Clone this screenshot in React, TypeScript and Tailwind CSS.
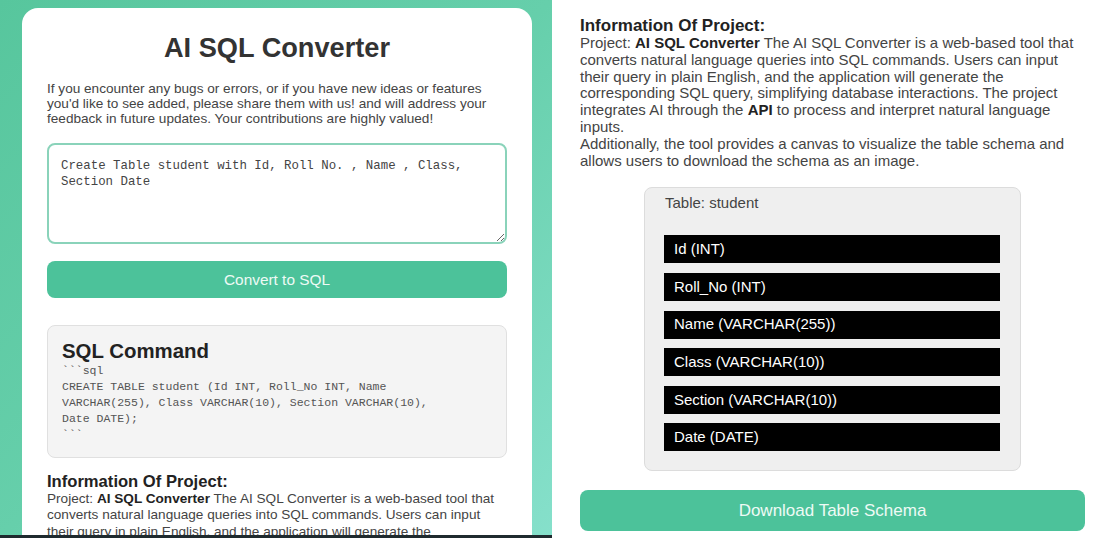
import React from 'react';

const columns = [
    'Id (INT)',
    'Roll_No (INT)',
    'Name (VARCHAR(255))',
    'Class (VARCHAR(10))',
    'Section (VARCHAR(10))',
    'Date (DATE)',
];

const sans = "font-['Liberation_Sans',Arial,sans-serif]";
const mono = "font-['Liberation_Mono','DejaVu_Sans_Mono',monospace]";

function ProjectInfo({ small }: { small?: boolean }) {
    return (
        <div className={small ? 'text-[13.6px] leading-[16.3px] text-[#444]' : 'text-[15px] leading-[16.8px] text-[#444]'}>
            <h3 className={small ? 'text-[16.6px] leading-[18px] font-bold text-[#222]' : 'text-[17px] leading-[18px] font-bold text-[#222]'}>
                Information Of Project:
            </h3>
            <p>
                Project: <b className="text-[#222]">AI SQL Converter</b> The AI SQL Converter is a web-based tool that converts natural
                language queries into SQL commands. Users can input their query in plain English, and the application will generate
                the corresponding SQL query, simplifying database interactions. The project integrates AI through the{' '}
                <b className="text-[#222]">API</b> to process and interpret natural language inputs.
                <br />
                Additionally, the tool provides a canvas to visualize the table schema and allows users to download the schema as an
                image.
            </p>
        </div>
    );
}

export default function App() {
    return (
        <div className={`flex w-[1105px] h-[538px] overflow-hidden bg-white ${sans}`}>
            {/* left: converter page */}
            <div className="w-[552px] h-full flex flex-col bg-gradient-to-br from-[#57c69d] via-[#66cfab] to-[#86e0cb]">
                <div className="flex-1 min-h-0 overflow-hidden pl-[22px] pr-[20px] pt-[8px]">
                    <div className="bg-white rounded-[16px] px-[25px] pt-[24px] pb-6">
                        <h1 className="text-center text-[27.2px] leading-[32px] font-bold text-[#333]">AI SQL Converter</h1>

                        <p className="mt-[17px] text-[13.6px] leading-[15px] text-[#444]">
                            If you encounter any bugs or errors, or if you have new ideas or features you'd like to see added, please share
                            them with us! and will address your feedback in future updates. Your contributions are highly valued!
                        </p>

                        <textarea
                            readOnly
                            defaultValue="Create Table student with Id, Roll No. , Name , Class, Section Date"
                            className={`mt-[17px] block w-full h-[101px] rounded-[8px] border-2 border-[#8ad3ba] px-[12px] py-[13px] text-[12.4px] leading-[16px] text-[#444] outline-none resize-y ${mono}`}
                        />

                        <button className="mt-[17px] w-full h-[37px] rounded-[8px] bg-[#4cc29a] text-[15.4px] text-[#eefaf5]">
                            Convert to SQL
                        </button>

                        <div className="mt-[27px] rounded-[8px] border border-[#e0e0e0] bg-[#f4f4f4] px-[14px] pt-[13px] pb-[14px]">
                            <h2 className="text-[20.4px] leading-[24px] font-bold text-[#222]">SQL Command</h2>
                            <pre className={`text-[11.5px] leading-[16px] text-[#555] whitespace-pre-wrap ${mono}`}>
{'```sql\nCREATE TABLE student (Id INT, Roll_No INT, Name\nVARCHAR(255), Class VARCHAR(10), Section VARCHAR(10),\nDate DATE);\n```'}
                            </pre>
                        </div>

                        <div className="mt-[15px]">
                            <ProjectInfo small />
                        </div>
                    </div>
                </div>
                <div className="h-[3px] bg-[#1f2a2e]" />
            </div>

            {/* right: schema page */}
            <div className="flex-1 pl-[28px] pr-[20px] pt-[17px]">
                <ProjectInfo />

                <div className="mx-auto mt-[18px] w-[377px] rounded-[8px] border border-[#dcdcdc] bg-[#efefef] pl-[19px] pr-[20px] pt-[6px] pb-[19px]">
                    <div className="pl-[1px] text-[15px] leading-[18px] text-[#444]">Table: student</div>
                    <div className="mt-[23px] flex flex-col gap-[9.6px]">
                        {columns.map(c => (
                            <div key={c} className="h-[28px] bg-black px-[10px] flex items-center text-[15px] text-white">
                                {c}
                            </div>
                        ))}
                    </div>
                </div>

                <button className="mt-[19px] w-full h-[41px] rounded-[8px] bg-[#4cc29a] text-[17px] text-[#eefaf5]">
                    Download Table Schema
                </button>
            </div>
        </div>
    );
}
